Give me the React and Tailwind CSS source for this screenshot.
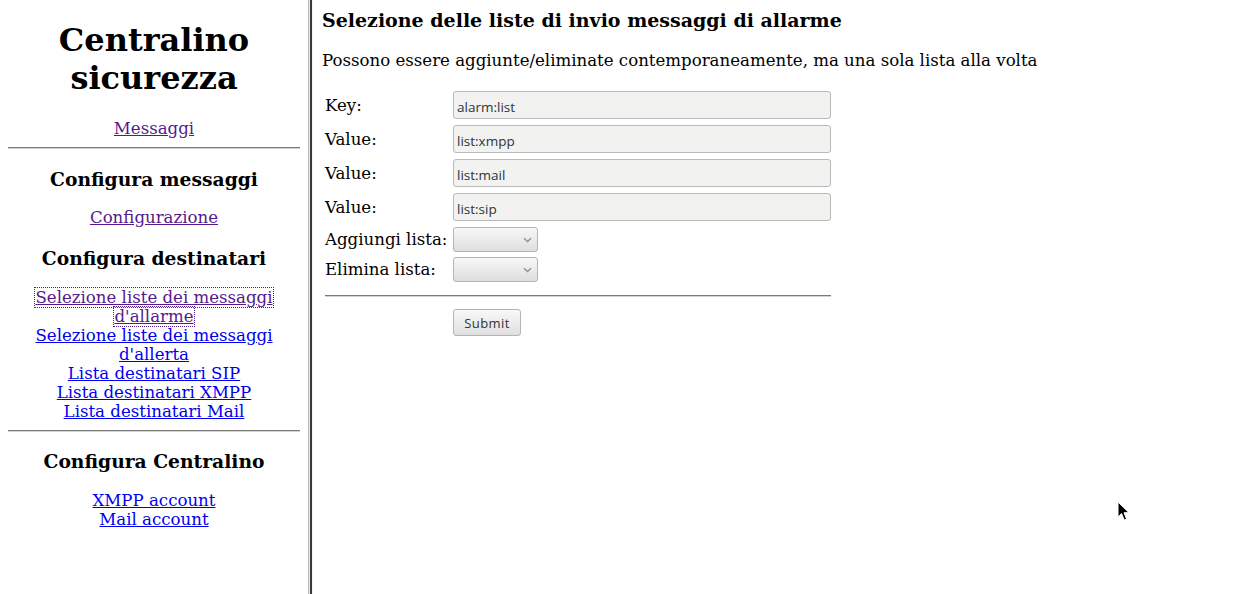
import React from "react";

const serif = { fontFamily: '"DejaVu Serif", serif' };
const sans = { fontFamily: '"Open Sans", "DejaVu Sans", sans-serif' };

function Hr({ className = "" }) {
  return <div className={"h-[2px] border-t border-t-[#7a7a7a] border-b border-b-[#d4d4d4] " + className} />;
}

function Link({ children, visited }) {
  return (
    <a href="#" className={"underline " + (visited ? "text-[#551a8b]" : "text-[#0000ee]")}>
      {children}
    </a>
  );
}

function TextInput({ value }) {
  return (
    <div
      className="h-[28px] w-[378px] rounded-[3px] border border-[#b9b9b7] bg-[#f2f2f1] pl-[3px] pt-[4px] flex items-center text-[13.5px] text-[#2e3436]"
      style={sans}
    >
      {value}
    </div>
  );
}

function Select() {
  return (
    <div className="relative h-[25px] w-[85px] rounded-[3px] border border-[#b4b4b4] bg-gradient-to-b from-[#f8f8f8] to-[#dedede]">
      <svg className="absolute right-[5px] top-[9px]" width="9" height="6" viewBox="0 0 9 6">
        <path d="M1 1.2 L4.5 4.5 L8 1.2" fill="none" stroke="#8f8f8f" strokeWidth="1.4" />
      </svg>
    </div>
  );
}

function Row({ label, children, h }) {
  return (
    <div className={"flex items-center " + h}>
      <div className="w-[128px] text-[16.6px] leading-[19px]">{label}</div>
      {children}
    </div>
  );
}

export default function App() {
  return (
    <div className="relative flex h-[594px] w-full bg-white text-black" style={serif}>
      {/* Left frame */}
      <div className="w-[308px] shrink-0 px-2 text-center text-[16.6px] leading-[19px]">
        <h1 className="pt-[21px] text-[32px] leading-[38px] font-bold">Centralino sicurezza</h1>
        <div className="mt-[22px]">
          <Link visited>Messaggi</Link>
        </div>
        <Hr className="mt-[9px]" />
        <h3 className="mt-[19px] text-[18.72px] leading-[22px] font-bold">Configura messaggi</h3>
        <div className="mt-[18px]">
          <Link visited>Configurazione</Link>
        </div>
        <h3 className="mt-[20px] text-[18.72px] leading-[22px] font-bold">Configura destinatari</h3>
        <div className="mt-[19px]">
          <a
            href="#"
            className="underline text-[#551a8b] outline-none border border-dotted border-[#551a8b] box-decoration-clone"
          >
            Selezione liste dei messaggi d'allarme
          </a>
          <br />
          <Link>Selezione liste dei messaggi d'allerta</Link>
          <br />
          <Link>Lista destinatari SIP</Link>
          <br />
          <Link>Lista destinatari XMPP</Link>
          <br />
          <Link>Lista destinatari Mail</Link>
        </div>
        <Hr className="mt-[9px]" />
        <h3 className="mt-[18px] text-[18.72px] leading-[22px] font-bold">Configura Centralino</h3>
        <div className="mt-[19px]">
          <Link>XMPP account</Link>
          <br />
          <Link>Mail account</Link>
        </div>
      </div>

      {/* Frame border */}
      <div className="flex h-full w-[5px] shrink-0">
        <div className="w-px bg-[#b5b5b5]" />
        <div className="w-px bg-[#ececec]" />
        <div className="w-[2px] bg-[#3a3a3a]" />
        <div className="w-px bg-[#f4f4f4]" />
      </div>

      {/* Right frame */}
      <div className="flex-1 pl-[9px]">
        <h3 className="pt-[9px] text-[19px] leading-[22px] font-bold">
          Selezione delle liste di invio messaggi di allarme
        </h3>
        <p className="mt-[20px] text-[16.6px] leading-[19px]">
          Possono essere aggiunte/eliminate contemporaneamente, ma una sola lista alla volta
        </p>
        <div className="mt-[21px] ml-[3px] w-[506px]">
          <div className="flex flex-col gap-[6px]">
            <Row label="Key:" h="h-[28px]">
              <TextInput value="alarm:list" />
            </Row>
            <Row label="Value:" h="h-[28px]">
              <TextInput value="list:xmpp" />
            </Row>
            <Row label="Value:" h="h-[28px]">
              <TextInput value="list:mail" />
            </Row>
            <Row label="Value:" h="h-[28px]">
              <TextInput value="list:sip" />
            </Row>
          </div>
          <div className="mt-[6px] flex flex-col gap-[5px]">
            <Row label="Aggiungi lista:" h="h-[25px]">
              <Select />
            </Row>
            <Row label="Elimina lista:" h="h-[25px]">
              <Select />
            </Row>
          </div>
          <Hr className="mt-[13px]" />
          <div className="mt-[12px] pl-[128px]">
            <button
              className="h-[27px] w-[68px] rounded-[3px] border border-[#b4b4b4] bg-gradient-to-b from-[#f8f8f8] to-[#e0e0e0] pt-[2px] text-[13px] text-[#2e3436] tracking-[0.4px]"
              style={sans}
            >
              Submit
            </button>
          </div>
        </div>
      </div>

      {/* Mouse cursor */}
      <svg className="absolute left-[1117px] top-[501px]" width="14" height="21" viewBox="0 0 14 21">
        <path
          d="M1 1 L1 16 L4.5 12.5 L7.2 19 L9.6 18 L7 11.7 L12 11.7 Z"
          fill="#000"
          stroke="#fff"
          strokeWidth="1"
          strokeLinejoin="round"
        />
      </svg>
    </div>
  );
}
